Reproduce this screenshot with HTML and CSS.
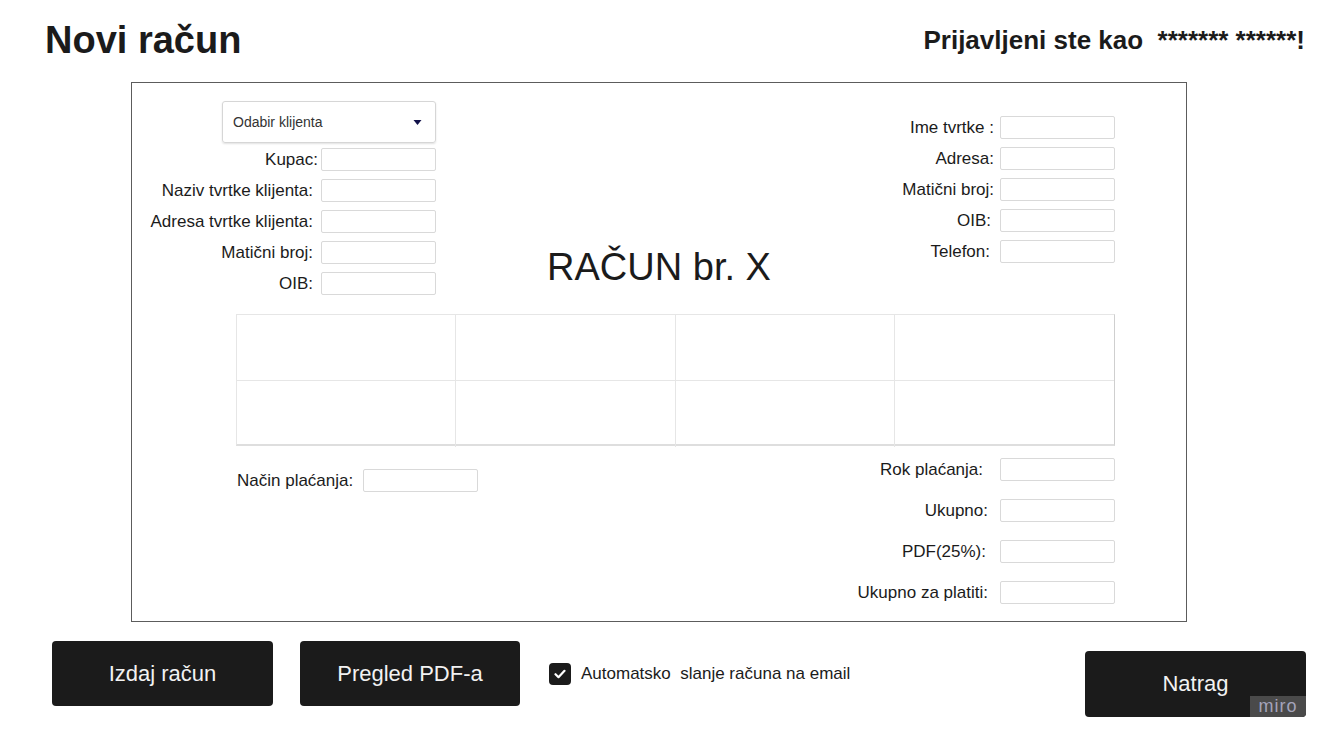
FILE: index.html
```html
<!DOCTYPE html>
<html lang="hr">
<head>
<meta charset="utf-8">
<title>Novi račun</title>
<link rel="stylesheet" href="styles.css">
</head>
<body>
<header class="topbar">
  <h1 class="page-title">Novi račun</h1>
  <div class="user">Prijavljeni ste kao&nbsp; ******* ******!</div>
</header>

<main class="invoice">
  <section class="top">
    <div class="client">
      <div class="select">
        <span>Odabir klijenta</span>
        <svg class="caret" width="9" height="5" viewBox="0 0 9 5"><path d="M0.5 0h8L4.5 5z" fill="#12124a"/></svg>
      </div>
      <label class="lbl lbl-kupac">Kupac:</label><span class="field"></span>
      <label class="lbl">Naziv tvrtke klijenta:</label><span class="field"></span>
      <label class="lbl">Adresa tvrtke klijenta:</label><span class="field"></span>
      <label class="lbl lbl-narrow">Matični broj:</label><span class="field"></span>
      <label class="lbl lbl-narrow">OIB:</label><span class="field"></span>
    </div>
    <h2 class="invoice-title">RAČUN br. X</h2>
    <div class="company">
      <label class="lbl">Ime tvrtke :</label><span class="field"></span>
      <label class="lbl">Adresa:</label><span class="field"></span>
      <label class="lbl">Matični broj:</label><span class="field"></span>
      <label class="lbl lbl-r3">OIB:</label><span class="field"></span>
      <label class="lbl lbl-r4">Telefon:</label><span class="field"></span>
    </div>
  </section>

  <div class="items">
    <div class="cell"></div><div class="cell"></div><div class="cell"></div><div class="cell"></div>
    <div class="cell"></div><div class="cell"></div><div class="cell"></div><div class="cell"></div>
  </div>

  <section class="bottom">
    <div class="payment">
      <label class="lbl">Način plaćanja:</label><span class="field"></span>
    </div>
    <div class="totals">
      <label class="lbl lbl-r5">Rok plaćanja:</label><span class="field"></span>
      <label class="lbl">Ukupno:</label><span class="field"></span>
      <label class="lbl lbl-r2">PDF(25%):</label><span class="field"></span>
      <label class="lbl">Ukupno za platiti:</label><span class="field"></span>
    </div>
  </section>
</main>

<footer class="actions">
  <button class="btn">Izdaj račun</button>
  <button class="btn">Pregled PDF-a</button>
  <div class="auto-send">
    <span class="check">
      <svg width="12" height="10" viewBox="0 0 12 10"><path d="M1.5 5.2l3 3L10.5 1.8" fill="none" stroke="#fff" stroke-width="2.2" stroke-linecap="round" stroke-linejoin="round"/></svg>
    </span>
    <span>Automatsko&nbsp; slanje računa na email</span>
  </div>
  <button class="btn btn-back">Natrag<span class="watermark">miro</span></button>
</footer>
</body>
</html>
```

FILE: styles.css
```css
* { box-sizing: border-box; }

html, body {
  margin: 0;
  padding: 0;
  background: #fff;
  width: 1333px;
  height: 749px;
  overflow: hidden;
}

body {
  font-family: "Liberation Sans", Arial, sans-serif;
  color: #1b1b1b;
}

/* header */
.topbar {
  display: flex;
  justify-content: space-between;
  align-items: flex-start;
  height: 82px;
  padding: 0 28px 0 45px;
}

.page-title {
  margin: 18px 0 0;
  font-size: 38px;
  line-height: 44px;
  font-weight: 700;
  color: #1b1b1b;
}

.user {
  margin-top: 25px;
  font-size: 26px;
  line-height: 30px;
  font-weight: 700;
  color: #1b1b1b;
}

/* invoice box */
.invoice {
  margin-left: 131px;
  width: 1056px;
  height: 540px;
  border: 1px solid #5c5c5c;
  padding-top: 18px;
}

.top {
  display: grid;
  grid-template-columns: 304px 446px 233px;
  height: 213px;
}

.lbl {
  font-size: 17px;
  line-height: 23px;
  color: #1b1b1b;
  text-align: right;
  white-space: nowrap;
}

.field {
  display: block;
  width: 115px;
  height: 23px;
  border: 1px solid #d9d9d9;
  border-radius: 2px;
  background: #fff;
}

.client {
  display: grid;
  grid-template-columns: 1fr 115px;
  column-gap: 3px;
  row-gap: 8px;
  align-content: start;
  align-items: center;
}

.client .lbl:not(.lbl-kupac) { padding-right: 5px; }
.client .lbl-narrow { padding-right: 9px; }

.select {
  grid-column: 1 / 3;
  justify-self: end;
  width: 214px;
  height: 42px;
  margin-bottom: -3px;
  border: 1px solid #d6d6d6;
  border-radius: 3px;
  box-shadow: 0 1px 2px rgba(0, 0, 0, 0.12);
  display: flex;
  align-items: center;
  justify-content: space-between;
  padding: 0 13px 0 10px;
  font-family: "Liberation Sans", Arial, sans-serif;
  font-size: 14px;
  color: #333;
}

.caret { display: block; }

.invoice-title {
  align-self: end;
  margin: 0 0 25px;
  text-align: center;
  font-size: 38px;
  line-height: 44px;
  font-weight: 400;
  color: #1b1b1b;
}

.company {
  display: grid;
  grid-template-columns: 1fr 115px;
  column-gap: 6px;
  row-gap: 8px;
  align-content: start;
  align-items: center;
  padding-top: 15px;
}

.company .lbl-r3 { padding-right: 3px; }
.company .lbl-r4 { padding-right: 4px; }

/* items table */
.items {
  display: grid;
  grid-template-columns: repeat(4, 1fr);
  grid-template-rows: 66px 66px;
  margin: 0 71px 0 104px;
  height: 132px;
  border-left: 1px solid #e6e6e6;
  border-top: 1px solid #e6e6e6;
  border-right: 1px solid #cfcfcf;
  border-bottom: 2px solid #dedede;
}

.cell {
  border-right: 1px solid #e6e6e6;
  border-bottom: 1px solid #e6e6e6;
}
.cell:nth-child(4n) { border-right: 0; }
.cell:nth-child(n+5) { border-bottom: 0; }

/* bottom section */
.bottom {
  display: flex;
  justify-content: space-between;
  align-items: flex-start;
  padding: 0 71px 0 105px;
}

.payment {
  display: flex;
  align-items: center;
  gap: 10px;
  margin-top: 23px;
}

.totals {
  display: grid;
  grid-template-columns: auto 115px;
  column-gap: 12px;
  row-gap: 18px;
  align-items: center;
  margin-top: 12px;
}

.totals .lbl-r5 { padding-right: 5px; }
.totals .lbl-r2 { padding-right: 2px; }

/* footer actions */
.actions {
  display: flex;
  align-items: flex-start;
  padding: 19px 27px 0 52px;
}

.btn {
  font-family: "Liberation Sans", Arial, sans-serif;
  font-size: 22px;
  color: #f2f2f2;
  background: #1b1b1b;
  border: 0;
  border-radius: 4px;
  width: 221px;
  height: 65px;
  padding: 0;
  margin: 0 27px 0 0;
}

.btn + .btn { width: 220px; margin-right: 29px; }

.auto-send {
  display: flex;
  align-items: center;
  gap: 10px;
  height: 66px;
  font-size: 17px;
  color: #1b1b1b;
}

.check {
  width: 22px;
  height: 22px;
  border-radius: 4px;
  background: #1b1b1b;
  display: flex;
  align-items: center;
  justify-content: center;
}

.btn.btn-back {
  position: relative;
  overflow: hidden;
  margin: 10px 0 0 auto;
  width: 221px;
  height: 66px;
}

.watermark {
  position: absolute;
  right: 0;
  bottom: 0;
  width: 56px;
  height: 21px;
  background: #4a4a4a;
  color: #a4a4bb;
  font-family: "Liberation Sans", Arial, sans-serif;
  font-size: 18px;
  line-height: 21px;
  text-align: center;
  letter-spacing: 1px;
}
```
